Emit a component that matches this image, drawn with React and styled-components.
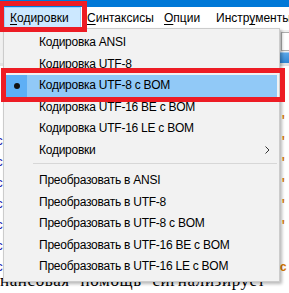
import React from "react";
import styled, { createGlobalStyle } from "styled-components";

const GlobalStyle = createGlobalStyle`
  html, body {
    margin: 0;
    padding: 0;
    background: #fff;
  }
  body {
    width: 289px;
    height: 293px;
    overflow: hidden;
    font-family: "Liberation Sans", Arial, sans-serif;
  }
`;

const Window = styled.div`
  position: relative;
  width: 289px;
  height: 293px;
  overflow: hidden;
  background: #fff;
  display: flex;
  flex-direction: column;
`;

const TitleBar = styled.div`
  flex: none;
  height: 7px;
  background: #0078d7;
`;

const MenuBar = styled.div`
  flex: none;
  height: 23px;
  display: flex;
  padding-left: 4px;
  background: #fff;
  font-size: 12px;
  color: #000;
`;

const BarItem = styled.div`
  flex: none;
  width: ${(p) => (p.$w ? `${p.$w}px` : "auto")};
  box-sizing: border-box;
  padding-left: 5px;
  line-height: 21px;
  white-space: nowrap;
  border: 1px solid ${(p) => (p.$active ? "#99d1ff" : "transparent")};
  background: ${(p) => (p.$active ? "#cce8ff" : "transparent")};

  u {
    text-underline-offset: 2px;
  }
`;

const Toolbar = styled.div`
  flex: none;
  height: 22px;
  display: flex;
  justify-content: flex-end;
  align-items: center;
  background: #f0f0f0;
`;

const ToolField = styled.div`
  width: 7px;
  height: 17px;
  background: #fff;
  border: 1px solid #adadad;
  border-right: none;
`;

const TabStrip = styled.div`
  flex: none;
  height: 11px;
  display: flex;
  justify-content: flex-end;
  background: #f0f0f0;
  border-bottom: 3px solid #e3e3e3;
`;

const Tab = styled.div`
  width: 9px;
  background: linear-gradient(#5aa5e6, #2f86d4);
  border-top: 1px solid #9ccaf2;
`;

const Editor = styled.div`
  flex: 1;
  display: flex;
  flex-direction: column;
  padding-top: 2px;
  background: #fff;
`;

const EditorRow = styled.div`
  flex: none;
  height: 21px;
  display: flex;
  justify-content: space-between;
  align-items: center;
  font-family: "Liberation Mono", monospace;
  font-size: 12px;
`;

const Lead = styled.span`
  margin-left: -4px;
  color: #1c1cb0;
`;

const Tail = styled.span`
  margin-right: 2px;
  color: #d87800;
  font-weight: bold;
`;

const Prose = styled.div`
  flex: none;
  margin-top: -4px;
  font-family: "Liberation Serif", serif;
  font-size: 17px;
  line-height: 14px;
  letter-spacing: 0.6px;
  word-spacing: 6px;
  white-space: nowrap;
  color: #000;
`;

const Dropdown = styled.div`
  position: absolute;
  left: 3px;
  top: 28px;
  width: 277px;
  box-sizing: border-box;
  padding: 3px 2px;
  background: #f2f2f2;
  border: 1px solid #cccccc;
  box-shadow: 2px 2px 3px rgba(0, 0, 0, 0.28);
  font-size: 12px;
  letter-spacing: -0.25px;
  color: #000;
`;

const MenuItem = styled.div`
  display: grid;
  grid-template-columns: 21px 1fr 20px;
  height: 21.5px;
  align-items: stretch;
  background: ${(p) => (p.$hover ? "#91c9f7" : "transparent")};
`;

const CheckCell = styled.div`
  display: flex;
  align-items: center;
  justify-content: center;
  background: ${(p) => (p.$hover ? "#5eaff5" : "transparent")};
`;

const Bullet = styled.span`
  width: 6px;
  height: 6px;
  border-radius: 50%;
  background: #111;
`;

const Label = styled.span`
  padding-left: 12px;
  line-height: 21.5px;
  white-space: nowrap;
`;

const ArrowCell = styled.div`
  display: flex;
  align-items: center;
  justify-content: center;
`;

const Separator = styled.div`
  height: 1px;
  margin: 2px 0 6px 27px;
  background: #d7d7d7;
`;

const Marker = styled.div`
  position: absolute;
  left: ${(p) => p.$x}px;
  top: ${(p) => p.$y}px;
  width: ${(p) => p.$w}px;
  height: ${(p) => p.$h}px;
  box-sizing: border-box;
  border: 5px solid #ed1c24;
  pointer-events: none;
`;

const items = [
  { label: "Кодировка ANSI" },
  { label: "Кодировка UTF-8" },
  { label: "Кодировка UTF-8 с BOM", checked: true, hover: true },
  { label: "Кодировка UTF-16 BE с BOM" },
  { label: "Кодировка UTF-16 LE с BOM" },
  { label: "Кодировки", submenu: true },
  { separator: true },
  { label: "Преобразовать в ANSI" },
  { label: "Преобразовать в UTF-8" },
  { label: "Преобразовать в UTF-8 с BOM" },
  { label: "Преобразовать в UTF-16 BE с BOM" },
  { label: "Преобразовать в UTF-16 LE с BOM" },
];

const rows = [
  { lead: "", tail: "" },
  { lead: "", tail: "'" },
  { lead: "", tail: "'" },
  { lead: "c", tail: "'" },
  { lead: "c", tail: "'" },
  { lead: "c", tail: "'" },
  { lead: "c", tail: "'" },
  { lead: "c", tail: "'" },
  { lead: "c", tail: "" },
  { lead: "c", tail: "c" },
];

const Chevron = () => (
  <svg width="5" height="8" viewBox="0 0 5 8">
    <path d="M0.5 0.5 L4 4 L0.5 7.5" fill="none" stroke="#333" strokeWidth="1" />
  </svg>
);

export default function App() {
  return (
    <>
      <GlobalStyle />
      <Window>
        <TitleBar />
        <MenuBar>
          <BarItem $w={77} $active>
            <u>К</u>одировки
          </BarItem>
          <BarItem $w={77}>
            <u>С</u>интаксисы
          </BarItem>
          <BarItem $w={52}>
            <u>О</u>пции
          </BarItem>
          <BarItem>
            Инстр<u>у</u>менты
          </BarItem>
        </MenuBar>
        <Toolbar>
          <ToolField />
        </Toolbar>
        <TabStrip>
          <Tab />
        </TabStrip>
        <Editor>
          {rows.map((r, i) => (
            <EditorRow key={i}>
              <Lead>{r.lead}</Lead>
              <Tail>{r.tail}</Tail>
            </EditorRow>
          ))}
          <Prose>нансовая помощь сигнализирует</Prose>
        </Editor>

        <Dropdown>
          {items.map((it, i) =>
            it.separator ? (
              <Separator key={i} />
            ) : (
              <MenuItem key={i} $hover={it.hover}>
                <CheckCell $hover={it.hover}>{it.checked && <Bullet />}</CheckCell>
                <Label>{it.label}</Label>
                <ArrowCell>{it.submenu && <Chevron />}</ArrowCell>
              </MenuItem>
            )
          )}
        </Dropdown>

        <Marker $x={-1} $y={1} $w={88} $h={31} />
        <Marker $x={1} $y={68} $w={284} $h={34} />
      </Window>
    </>
  );
}
